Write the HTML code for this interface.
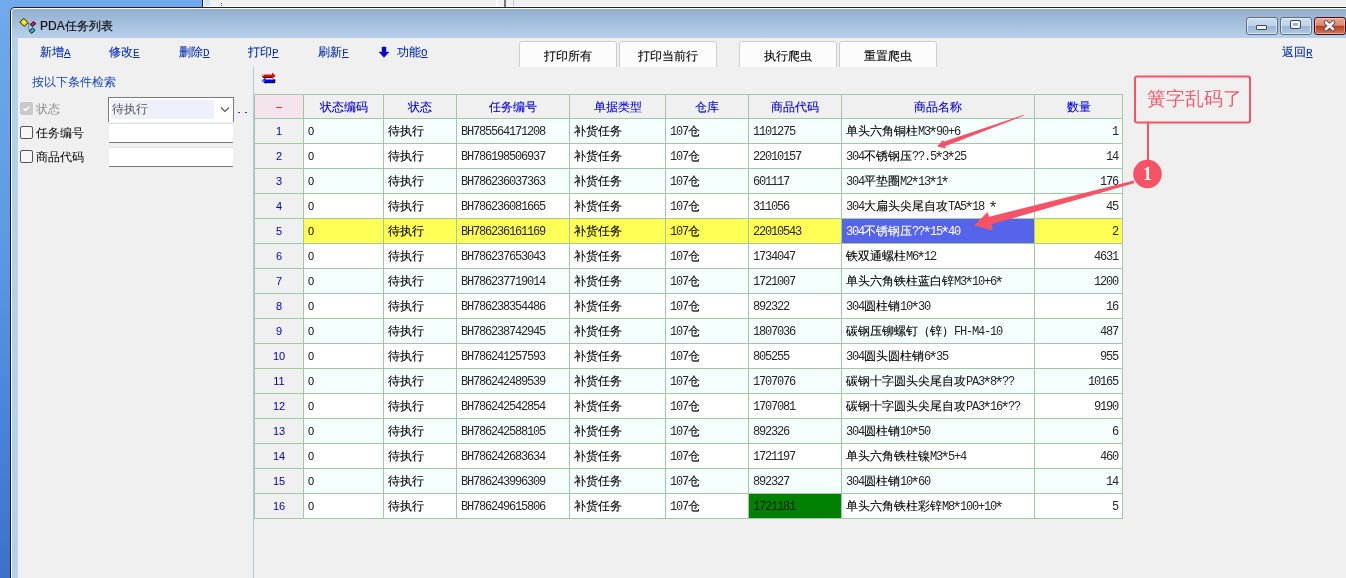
<!DOCTYPE html>
<html><head><meta charset="utf-8">
<style>
html,body{margin:0;padding:0}
body{width:1346px;height:578px;overflow:hidden;position:relative;font-family:"Liberation Sans",sans-serif;font-size:12px;
 background:linear-gradient(180deg,#70aaec 0%,#5e9ae4 40%,#4d88dc 66%,#3d70c6 100%)}
.abs{position:absolute}
.c{-webkit-text-stroke:0.1px currentColor;position:absolute;box-sizing:border-box;white-space:nowrap;overflow:hidden;line-height:24px;font-size:12px;color:#000;padding-left:4px}
.hdr{text-align:center;color:#0000e0;padding-left:0}
.hdr0{text-align:center;color:#ff0000;padding-left:0}
.rn{-webkit-text-stroke:0;text-align:center;color:#0000b0;padding-left:0;font-size:11px}
.t{font-size:11px;-webkit-text-stroke:0}
.q{text-align:right;padding-left:0;padding-right:4px}
.l{-webkit-text-stroke:0;font-family:"Liberation Mono",monospace;font-size:12px;letter-spacing:-1.2px}
.c .l{color:#262626}
.c.sel .l{color:#fff}
.ast{position:relative;top:3px;left:-1.8px;font-size:16px;letter-spacing:-3.6px;line-height:0}
.vl{position:absolute;width:1px;background:#a2c9a2}
.hl{position:absolute;height:1px;background:#a2c9a2}
.menu{-webkit-text-stroke:0.1px currentColor;position:absolute;top:45px;color:#002cb0;font-size:12px;line-height:14px;white-space:nowrap}
.menu u{-webkit-text-stroke:0;font-family:"Liberation Mono",monospace;font-size:11px}
.btn{-webkit-text-stroke:0.1px currentColor;position:absolute;top:41px;width:96px;height:30px;border:1px solid #cdcdcd;border-radius:3px;background:#fcfcfc;box-sizing:content-box;text-align:center;line-height:28px;font-size:12px;color:#000}
.cb{position:absolute;left:20px;width:11px;height:11px;border:1px solid #555;border-radius:2px;background:#f6f6f6}
.lab{position:absolute;left:36px;font-size:12px;line-height:14px;color:#000;white-space:nowrap}
.tb{position:absolute;left:109px;width:124px;background:#fff;border-top:1px solid #e3e3e3;border-bottom:1px solid #7a7a7a}
#root{position:absolute;left:0;top:0;width:1346px;height:578px;overflow:hidden;will-change:transform}
</style></head><body><div id="root">
<!-- back window strip -->
<div class="abs" style="left:202px;top:0;width:1144px;height:7px;background:#f0f0f0"></div>
<div class="abs" style="left:202px;top:0;width:1px;height:7px;background:#222"></div>
<div class="abs" style="left:203px;top:0;width:1px;height:7px;background:#fff"></div>
<div class="abs" style="left:204px;top:0;width:6px;height:6px;background:#d5e4f3"></div>
<div class="abs" style="left:203px;top:6px;width:1143px;height:1px;background:#fff"></div>
<div class="abs" style="left:221px;top:3px;width:1px;height:1px;background:#555"></div>
<div class="abs" style="left:221px;top:5px;width:1px;height:1px;background:#555"></div>
<div class="abs" style="left:496px;top:0;width:2px;height:6px;background:#fff"></div>
<div class="abs" style="left:504px;top:0;width:2px;height:7px;background:#777"></div>
<div class="abs" style="left:513px;top:0;width:1px;height:6px;background:#b0d0f4"></div>

<!-- main window frame -->
<div class="abs" style="left:10px;top:7px;width:1346px;height:600px;background:#222;border-top-left-radius:5px"></div>
<div class="abs" style="left:11px;top:8px;width:1346px;height:600px;background:#fff;border-top-left-radius:4px"></div>
<div class="abs" style="left:12px;top:9px;width:1346px;height:600px;background:linear-gradient(180deg,#93afd0 0px,#b8d0ea 29px,#b8d0ea 100%);border-top-left-radius:3px"></div>
<!-- client -->
<div class="abs" style="left:18px;top:38px;width:1328px;height:540px;background:#f0f0f0"></div>

<!-- title icon -->
<svg class="abs" style="left:18px;top:16px" width="22" height="20" viewBox="18 16 22 20">
 <path d="M27.5 23.5 H30.5 M28.5 23.5 V29.5 H30.5" stroke="#8a8a8a" stroke-width="1" fill="none"/>
 <path d="M20 22.2 L23.8 18.3 L28 22.6 L24.2 26.4 Z" fill="#f4ec00" stroke="#111" stroke-width="1"/>
 <path d="M30.3 24.6 L33.4 21.5 L35.8 23.7 L32.6 26.6 Z" fill="#d2108a" stroke="#111" stroke-width="1"/>
 <path d="M29.2 31 L32.6 28 L35 30.2 L31.8 33.4 Z" fill="#12c6d2" stroke="#111" stroke-width="1"/>
</svg>
<div class="abs" style="left:40px;top:19px;font-size:12px;line-height:14px;color:#101010;-webkit-text-stroke:0.2px #101010">PDA任务列表</div>

<!-- caption buttons -->
<div class="abs" style="left:1246px;top:17px;width:30px;height:16px;border:1px solid #5b6d85;border-radius:3px;box-shadow:inset 0 0 0 1px rgba(255,255,255,0.55);background:linear-gradient(180deg,#cadcf0 0,#bed3ea 50%,#99b5d4 51%,#b0c9e5 100%)"></div>
<div class="abs" style="left:1256px;top:25px;width:9px;height:3px;border:1px solid #39475a;background:#f2f2f2;border-radius:1px"></div>
<div class="abs" style="left:1280px;top:17px;width:30px;height:16px;border:1px solid #5b6d85;border-radius:3px;box-shadow:inset 0 0 0 1px rgba(255,255,255,0.55);background:linear-gradient(180deg,#cadcf0 0,#bed3ea 50%,#99b5d4 51%,#b0c9e5 100%)"></div>
<div class="abs" style="left:1291px;top:21px;width:5px;height:3px;border:2px solid #f2f2f2;outline:1px solid #39475a;background:#9ab6d6;border-radius:1px"></div>
<div class="abs" style="left:1314px;top:17px;width:30px;height:16px;border:1px solid #4a0e12;border-radius:3px;box-shadow:inset 0 0 0 1px rgba(255,220,210,0.5);background:linear-gradient(180deg,#eaa692 0,#db8a74 45%,#bc3e20 52%,#d2765c 100%)"></div>
<svg class="abs" style="left:1322px;top:20px" width="16" height="12" viewBox="0 0 16 12">
 <path d="M4 2.5 L11 9 M11 2.5 L4 9" stroke="#3a3f48" stroke-width="4.4" stroke-linecap="round"/>
 <path d="M4 2.5 L11 9 M11 2.5 L4 9" stroke="#f6f6f6" stroke-width="2.8" stroke-linecap="round"/>
</svg>
<!-- menu -->
<div class="menu" style="left:40px">新增<u>A</u></div>
<div class="menu" style="left:109px">修改<u>E</u></div>
<div class="menu" style="left:179px">删除<u>D</u></div>
<div class="menu" style="left:248px">打印<u>P</u></div>
<div class="menu" style="left:318px">刷新<u>F</u></div>
<svg class="abs" style="left:378px;top:46px" width="12" height="13" viewBox="0 0 12 13">
 <path d="M4 1 H8 V6 H11 L6 11.5 L1 6 H4 Z" fill="#0000f0" stroke="#333" stroke-width="0.5"/>
</svg>
<div class="menu" style="left:397px">功能<u>O</u></div>
<div class="menu" style="left:1282px">返回<u>R</u></div>

<!-- buttons -->
<div class="btn" style="left:519px">打印所有</div>
<div class="btn" style="left:619px">打印当前行</div>
<div class="btn" style="left:739px">执行爬虫</div>
<div class="btn" style="left:839px">重置爬虫</div>
<div class="abs" style="left:500px;top:67px;width:460px;height:8px;background:#f0f0f0"></div>

<!-- left panel -->
<div class="abs" style="left:32px;top:75px;font-size:12px;line-height:14px;color:#1846b8;white-space:nowrap">按以下条件检索</div>
<div class="cb" style="top:102px;background:#c9c9c9;border-color:#c9c9c9"></div>
<svg class="abs" style="left:20px;top:102px" width="13" height="13"><path d="M3.5 6.5 L5.5 8.5 L9.5 4.5" stroke="#fff" stroke-width="1.3" fill="none"/></svg>
<div class="lab" style="top:102px;color:#8c8c8c">状态</div>
<div class="cb" style="top:126px"></div>
<div class="lab" style="top:126px">任务编号</div>
<div class="cb" style="top:150px"></div>
<div class="lab" style="top:150px">商品代码</div>

<div class="abs" style="left:108px;top:97px;width:124px;height:24px;background:#fff;border:1px solid #7a7a7a;border-bottom:none"></div>
<div class="abs" style="left:111px;top:100px;width:103px;height:19px;background:#eef0fc"></div>
<div class="abs" style="left:112px;top:102px;font-size:12px;line-height:14px;color:#555">待执行</div>
<svg class="abs" style="left:220px;top:106px" width="11" height="8"><path d="M1 1.5 L5 5.5 L9 1.5" stroke="#555" stroke-width="1.1" fill="none"/></svg>
<div class="abs" style="left:238px;top:112px;width:2px;height:1px;background:#1c3ee0"></div>
<div class="abs" style="left:245px;top:112px;width:2px;height:1px;background:#1c3ee0"></div>
<div class="tb" style="top:123px;height:18px"></div>
<div class="tb" style="top:147px;height:18px"></div>

<!-- splitter -->
<div class="abs" style="left:253px;top:67px;width:1px;height:511px;background:#a9cbf2"></div>
<div class="abs" style="left:17px;top:38px;width:1px;height:540px;background:#b9d1ea"></div>

<!-- grid toolbar icon -->
<svg class="abs" style="left:0;top:0" width="300" height="100" viewBox="0 0 300 100">
 <rect x="263" y="77" width="9" height="1" fill="#111"/>
 <rect x="262" y="74.6" width="11" height="2.4" fill="#f00000"/>
 <path d="M272 72.5 L275.5 75.8 L272 79 Z" fill="#f00000"/>
 <rect x="262.5" y="74.5" width="1.5" height="1.5" fill="#ffe000"/>
 <rect x="265" y="82" width="10" height="1.2" fill="#111"/>
 <rect x="264" y="79.5" width="11" height="2.5" fill="#0000f0"/>
 <path d="M265.5 77.5 L261.8 80.8 L265.5 84 Z" fill="#0000f0"/>
 <rect x="263" y="80" width="1.5" height="1.5" fill="#20d0ff"/>
 <rect x="273.5" y="79.5" width="1.8" height="3" fill="#000060"/>
</svg>
<div class="c hdr0" style="left:255px;top:95px;width:48px;height:23px;background:#f5e4ee">－</div>
<div class="c hdr" style="left:304px;top:95px;width:79px;height:23px;background:#f0f0f0">状态编码</div>
<div class="c hdr" style="left:384px;top:95px;width:72px;height:23px;background:#f0f0f0">状态</div>
<div class="c hdr" style="left:457px;top:95px;width:112px;height:23px;background:#f0f0f0">任务编号</div>
<div class="c hdr" style="left:570px;top:95px;width:95px;height:23px;background:#f0f0f0">单据类型</div>
<div class="c hdr" style="left:666px;top:95px;width:82px;height:23px;background:#f0f0f0">仓库</div>
<div class="c hdr" style="left:749px;top:95px;width:92px;height:23px;background:#f0f0f0">商品代码</div>
<div class="c hdr" style="left:842px;top:95px;width:192px;height:23px;background:#f0f0f0">商品名称</div>
<div class="c hdr" style="left:1035px;top:95px;width:87px;height:23px;background:#f0f0f0">数量</div>
<div class="c rn" style="left:255px;top:119px;width:48px;height:24px;background:#f0f0f0;">1</div>
<div class="c d t" style="left:304px;top:119px;width:79px;height:24px;background:#f5ffff;">0</div>
<div class="c d" style="left:384px;top:119px;width:72px;height:24px;background:#f5ffff;">待执行</div>
<div class="c d" style="left:457px;top:119px;width:112px;height:24px;background:#f5ffff;"><span class="l">BH785564171208</span></div>
<div class="c d" style="left:570px;top:119px;width:95px;height:24px;background:#f5ffff;">补货任务</div>
<div class="c d" style="left:666px;top:119px;width:82px;height:24px;background:#f5ffff;"><span class="l">107</span>仓</div>
<div class="c d" style="left:749px;top:119px;width:92px;height:24px;background:#f5ffff;"><span class="l">1101275</span></div>
<div class="c d" style="left:842px;top:119px;width:192px;height:24px;background:#f5ffff;">单头六角铜柱<span class="l">M3<span class="ast">*</span>90+6</span></div>
<div class="c d q" style="left:1035px;top:119px;width:87px;height:24px;background:#f5ffff;"><span class="l">1</span></div>
<div class="c rn" style="left:255px;top:144px;width:48px;height:24px;background:#f0f0f0;">2</div>
<div class="c d t" style="left:304px;top:144px;width:79px;height:24px;background:#ffffff;">0</div>
<div class="c d" style="left:384px;top:144px;width:72px;height:24px;background:#ffffff;">待执行</div>
<div class="c d" style="left:457px;top:144px;width:112px;height:24px;background:#ffffff;"><span class="l">BH786198506937</span></div>
<div class="c d" style="left:570px;top:144px;width:95px;height:24px;background:#ffffff;">补货任务</div>
<div class="c d" style="left:666px;top:144px;width:82px;height:24px;background:#ffffff;"><span class="l">107</span>仓</div>
<div class="c d" style="left:749px;top:144px;width:92px;height:24px;background:#ffffff;"><span class="l">22010157</span></div>
<div class="c d" style="left:842px;top:144px;width:192px;height:24px;background:#ffffff;"><span class="l">304</span>不锈钢压<span class="l">??.5<span class="ast">*</span>3<span class="ast">*</span>25</span></div>
<div class="c d q" style="left:1035px;top:144px;width:87px;height:24px;background:#ffffff;"><span class="l">14</span></div>
<div class="c rn" style="left:255px;top:169px;width:48px;height:24px;background:#f0f0f0;">3</div>
<div class="c d t" style="left:304px;top:169px;width:79px;height:24px;background:#f5ffff;">0</div>
<div class="c d" style="left:384px;top:169px;width:72px;height:24px;background:#f5ffff;">待执行</div>
<div class="c d" style="left:457px;top:169px;width:112px;height:24px;background:#f5ffff;"><span class="l">BH786236037363</span></div>
<div class="c d" style="left:570px;top:169px;width:95px;height:24px;background:#f5ffff;">补货任务</div>
<div class="c d" style="left:666px;top:169px;width:82px;height:24px;background:#f5ffff;"><span class="l">107</span>仓</div>
<div class="c d" style="left:749px;top:169px;width:92px;height:24px;background:#f5ffff;"><span class="l">601117</span></div>
<div class="c d" style="left:842px;top:169px;width:192px;height:24px;background:#f5ffff;"><span class="l">304</span>平垫圈<span class="l">M2<span class="ast">*</span>13<span class="ast">*</span>1<span class="ast">*</span></span></div>
<div class="c d q" style="left:1035px;top:169px;width:87px;height:24px;background:#f5ffff;"><span class="l">176</span></div>
<div class="c rn" style="left:255px;top:194px;width:48px;height:24px;background:#f0f0f0;">4</div>
<div class="c d t" style="left:304px;top:194px;width:79px;height:24px;background:#ffffff;">0</div>
<div class="c d" style="left:384px;top:194px;width:72px;height:24px;background:#ffffff;">待执行</div>
<div class="c d" style="left:457px;top:194px;width:112px;height:24px;background:#ffffff;"><span class="l">BH786236081665</span></div>
<div class="c d" style="left:570px;top:194px;width:95px;height:24px;background:#ffffff;">补货任务</div>
<div class="c d" style="left:666px;top:194px;width:82px;height:24px;background:#ffffff;"><span class="l">107</span>仓</div>
<div class="c d" style="left:749px;top:194px;width:92px;height:24px;background:#ffffff;"><span class="l">311056</span></div>
<div class="c d" style="left:842px;top:194px;width:192px;height:24px;background:#ffffff;"><span class="l">304</span>大扁头尖尾自攻<span class="l">TA5<span class="ast">*</span>18&nbsp;<span class="ast">*</span></span></div>
<div class="c d q" style="left:1035px;top:194px;width:87px;height:24px;background:#ffffff;"><span class="l">45</span></div>
<div class="c rn" style="left:255px;top:219px;width:48px;height:24px;background:#f0f0f0;">5</div>
<div class="c d t" style="left:304px;top:219px;width:79px;height:24px;background:#ffff55;">0</div>
<div class="c d" style="left:384px;top:219px;width:72px;height:24px;background:#ffff55;">待执行</div>
<div class="c d" style="left:457px;top:219px;width:112px;height:24px;background:#ffff55;"><span class="l">BH786236161169</span></div>
<div class="c d" style="left:570px;top:219px;width:95px;height:24px;background:#ffff55;">补货任务</div>
<div class="c d" style="left:666px;top:219px;width:82px;height:24px;background:#ffff55;"><span class="l">107</span>仓</div>
<div class="c d" style="left:749px;top:219px;width:92px;height:24px;background:#ffff55;"><span class="l">22010543</span></div>
<div class="c d sel" style="left:842px;top:219px;width:192px;height:24px;background:#5664ec;color:#fff;"><span class="l">304</span>不锈钢压<span class="l">??<span class="ast">*</span>15<span class="ast">*</span>40</span></div>
<div class="c d q" style="left:1035px;top:219px;width:87px;height:24px;background:#ffff55;"><span class="l">2</span></div>
<div class="c rn" style="left:255px;top:244px;width:48px;height:24px;background:#f0f0f0;">6</div>
<div class="c d t" style="left:304px;top:244px;width:79px;height:24px;background:#ffffff;">0</div>
<div class="c d" style="left:384px;top:244px;width:72px;height:24px;background:#ffffff;">待执行</div>
<div class="c d" style="left:457px;top:244px;width:112px;height:24px;background:#ffffff;"><span class="l">BH786237653043</span></div>
<div class="c d" style="left:570px;top:244px;width:95px;height:24px;background:#ffffff;">补货任务</div>
<div class="c d" style="left:666px;top:244px;width:82px;height:24px;background:#ffffff;"><span class="l">107</span>仓</div>
<div class="c d" style="left:749px;top:244px;width:92px;height:24px;background:#ffffff;"><span class="l">1734047</span></div>
<div class="c d" style="left:842px;top:244px;width:192px;height:24px;background:#ffffff;">铁双通螺柱<span class="l">M6<span class="ast">*</span>12</span></div>
<div class="c d q" style="left:1035px;top:244px;width:87px;height:24px;background:#ffffff;"><span class="l">4631</span></div>
<div class="c rn" style="left:255px;top:269px;width:48px;height:24px;background:#f0f0f0;">7</div>
<div class="c d t" style="left:304px;top:269px;width:79px;height:24px;background:#f5ffff;">0</div>
<div class="c d" style="left:384px;top:269px;width:72px;height:24px;background:#f5ffff;">待执行</div>
<div class="c d" style="left:457px;top:269px;width:112px;height:24px;background:#f5ffff;"><span class="l">BH786237719014</span></div>
<div class="c d" style="left:570px;top:269px;width:95px;height:24px;background:#f5ffff;">补货任务</div>
<div class="c d" style="left:666px;top:269px;width:82px;height:24px;background:#f5ffff;"><span class="l">107</span>仓</div>
<div class="c d" style="left:749px;top:269px;width:92px;height:24px;background:#f5ffff;"><span class="l">1721007</span></div>
<div class="c d" style="left:842px;top:269px;width:192px;height:24px;background:#f5ffff;">单头六角铁柱蓝白锌<span class="l">M3<span class="ast">*</span>10+6<span class="ast">*</span></span></div>
<div class="c d q" style="left:1035px;top:269px;width:87px;height:24px;background:#f5ffff;"><span class="l">1200</span></div>
<div class="c rn" style="left:255px;top:294px;width:48px;height:24px;background:#f0f0f0;">8</div>
<div class="c d t" style="left:304px;top:294px;width:79px;height:24px;background:#ffffff;">0</div>
<div class="c d" style="left:384px;top:294px;width:72px;height:24px;background:#ffffff;">待执行</div>
<div class="c d" style="left:457px;top:294px;width:112px;height:24px;background:#ffffff;"><span class="l">BH786238354486</span></div>
<div class="c d" style="left:570px;top:294px;width:95px;height:24px;background:#ffffff;">补货任务</div>
<div class="c d" style="left:666px;top:294px;width:82px;height:24px;background:#ffffff;"><span class="l">107</span>仓</div>
<div class="c d" style="left:749px;top:294px;width:92px;height:24px;background:#ffffff;"><span class="l">892322</span></div>
<div class="c d" style="left:842px;top:294px;width:192px;height:24px;background:#ffffff;"><span class="l">304</span>圆柱销<span class="l">10<span class="ast">*</span>30</span></div>
<div class="c d q" style="left:1035px;top:294px;width:87px;height:24px;background:#ffffff;"><span class="l">16</span></div>
<div class="c rn" style="left:255px;top:319px;width:48px;height:24px;background:#f0f0f0;">9</div>
<div class="c d t" style="left:304px;top:319px;width:79px;height:24px;background:#f5ffff;">0</div>
<div class="c d" style="left:384px;top:319px;width:72px;height:24px;background:#f5ffff;">待执行</div>
<div class="c d" style="left:457px;top:319px;width:112px;height:24px;background:#f5ffff;"><span class="l">BH786238742945</span></div>
<div class="c d" style="left:570px;top:319px;width:95px;height:24px;background:#f5ffff;">补货任务</div>
<div class="c d" style="left:666px;top:319px;width:82px;height:24px;background:#f5ffff;"><span class="l">107</span>仓</div>
<div class="c d" style="left:749px;top:319px;width:92px;height:24px;background:#f5ffff;"><span class="l">1807036</span></div>
<div class="c d" style="left:842px;top:319px;width:192px;height:24px;background:#f5ffff;">碳钢压铆螺钉（锌）<span class="l">FH-M4-10</span></div>
<div class="c d q" style="left:1035px;top:319px;width:87px;height:24px;background:#f5ffff;"><span class="l">487</span></div>
<div class="c rn" style="left:255px;top:344px;width:48px;height:24px;background:#f0f0f0;">10</div>
<div class="c d t" style="left:304px;top:344px;width:79px;height:24px;background:#ffffff;">0</div>
<div class="c d" style="left:384px;top:344px;width:72px;height:24px;background:#ffffff;">待执行</div>
<div class="c d" style="left:457px;top:344px;width:112px;height:24px;background:#ffffff;"><span class="l">BH786241257593</span></div>
<div class="c d" style="left:570px;top:344px;width:95px;height:24px;background:#ffffff;">补货任务</div>
<div class="c d" style="left:666px;top:344px;width:82px;height:24px;background:#ffffff;"><span class="l">107</span>仓</div>
<div class="c d" style="left:749px;top:344px;width:92px;height:24px;background:#ffffff;"><span class="l">805255</span></div>
<div class="c d" style="left:842px;top:344px;width:192px;height:24px;background:#ffffff;"><span class="l">304</span>圆头圆柱销<span class="l">6<span class="ast">*</span>35</span></div>
<div class="c d q" style="left:1035px;top:344px;width:87px;height:24px;background:#ffffff;"><span class="l">955</span></div>
<div class="c rn" style="left:255px;top:369px;width:48px;height:24px;background:#f0f0f0;">11</div>
<div class="c d t" style="left:304px;top:369px;width:79px;height:24px;background:#f5ffff;">0</div>
<div class="c d" style="left:384px;top:369px;width:72px;height:24px;background:#f5ffff;">待执行</div>
<div class="c d" style="left:457px;top:369px;width:112px;height:24px;background:#f5ffff;"><span class="l">BH786242489539</span></div>
<div class="c d" style="left:570px;top:369px;width:95px;height:24px;background:#f5ffff;">补货任务</div>
<div class="c d" style="left:666px;top:369px;width:82px;height:24px;background:#f5ffff;"><span class="l">107</span>仓</div>
<div class="c d" style="left:749px;top:369px;width:92px;height:24px;background:#f5ffff;"><span class="l">1707076</span></div>
<div class="c d" style="left:842px;top:369px;width:192px;height:24px;background:#f5ffff;">碳钢十字圆头尖尾自攻<span class="l">PA3<span class="ast">*</span>8<span class="ast">*</span>??</span></div>
<div class="c d q" style="left:1035px;top:369px;width:87px;height:24px;background:#f5ffff;"><span class="l">10165</span></div>
<div class="c rn" style="left:255px;top:394px;width:48px;height:24px;background:#f0f0f0;">12</div>
<div class="c d t" style="left:304px;top:394px;width:79px;height:24px;background:#ffffff;">0</div>
<div class="c d" style="left:384px;top:394px;width:72px;height:24px;background:#ffffff;">待执行</div>
<div class="c d" style="left:457px;top:394px;width:112px;height:24px;background:#ffffff;"><span class="l">BH786242542854</span></div>
<div class="c d" style="left:570px;top:394px;width:95px;height:24px;background:#ffffff;">补货任务</div>
<div class="c d" style="left:666px;top:394px;width:82px;height:24px;background:#ffffff;"><span class="l">107</span>仓</div>
<div class="c d" style="left:749px;top:394px;width:92px;height:24px;background:#ffffff;"><span class="l">1707081</span></div>
<div class="c d" style="left:842px;top:394px;width:192px;height:24px;background:#ffffff;">碳钢十字圆头尖尾自攻<span class="l">PA3<span class="ast">*</span>16<span class="ast">*</span>??</span></div>
<div class="c d q" style="left:1035px;top:394px;width:87px;height:24px;background:#ffffff;"><span class="l">9190</span></div>
<div class="c rn" style="left:255px;top:419px;width:48px;height:24px;background:#f0f0f0;">13</div>
<div class="c d t" style="left:304px;top:419px;width:79px;height:24px;background:#f5ffff;">0</div>
<div class="c d" style="left:384px;top:419px;width:72px;height:24px;background:#f5ffff;">待执行</div>
<div class="c d" style="left:457px;top:419px;width:112px;height:24px;background:#f5ffff;"><span class="l">BH786242588105</span></div>
<div class="c d" style="left:570px;top:419px;width:95px;height:24px;background:#f5ffff;">补货任务</div>
<div class="c d" style="left:666px;top:419px;width:82px;height:24px;background:#f5ffff;"><span class="l">107</span>仓</div>
<div class="c d" style="left:749px;top:419px;width:92px;height:24px;background:#f5ffff;"><span class="l">892326</span></div>
<div class="c d" style="left:842px;top:419px;width:192px;height:24px;background:#f5ffff;"><span class="l">304</span>圆柱销<span class="l">10<span class="ast">*</span>50</span></div>
<div class="c d q" style="left:1035px;top:419px;width:87px;height:24px;background:#f5ffff;"><span class="l">6</span></div>
<div class="c rn" style="left:255px;top:444px;width:48px;height:24px;background:#f0f0f0;">14</div>
<div class="c d t" style="left:304px;top:444px;width:79px;height:24px;background:#ffffff;">0</div>
<div class="c d" style="left:384px;top:444px;width:72px;height:24px;background:#ffffff;">待执行</div>
<div class="c d" style="left:457px;top:444px;width:112px;height:24px;background:#ffffff;"><span class="l">BH786242683634</span></div>
<div class="c d" style="left:570px;top:444px;width:95px;height:24px;background:#ffffff;">补货任务</div>
<div class="c d" style="left:666px;top:444px;width:82px;height:24px;background:#ffffff;"><span class="l">107</span>仓</div>
<div class="c d" style="left:749px;top:444px;width:92px;height:24px;background:#ffffff;"><span class="l">1721197</span></div>
<div class="c d" style="left:842px;top:444px;width:192px;height:24px;background:#ffffff;">单头六角铁柱镍<span class="l">M3<span class="ast">*</span>5+4</span></div>
<div class="c d q" style="left:1035px;top:444px;width:87px;height:24px;background:#ffffff;"><span class="l">460</span></div>
<div class="c rn" style="left:255px;top:469px;width:48px;height:24px;background:#f0f0f0;">15</div>
<div class="c d t" style="left:304px;top:469px;width:79px;height:24px;background:#f5ffff;">0</div>
<div class="c d" style="left:384px;top:469px;width:72px;height:24px;background:#f5ffff;">待执行</div>
<div class="c d" style="left:457px;top:469px;width:112px;height:24px;background:#f5ffff;"><span class="l">BH786243996309</span></div>
<div class="c d" style="left:570px;top:469px;width:95px;height:24px;background:#f5ffff;">补货任务</div>
<div class="c d" style="left:666px;top:469px;width:82px;height:24px;background:#f5ffff;"><span class="l">107</span>仓</div>
<div class="c d" style="left:749px;top:469px;width:92px;height:24px;background:#f5ffff;"><span class="l">892327</span></div>
<div class="c d" style="left:842px;top:469px;width:192px;height:24px;background:#f5ffff;"><span class="l">304</span>圆柱销<span class="l">10<span class="ast">*</span>60</span></div>
<div class="c d q" style="left:1035px;top:469px;width:87px;height:24px;background:#f5ffff;"><span class="l">14</span></div>
<div class="c rn" style="left:255px;top:494px;width:48px;height:24px;background:#f0f0f0;">16</div>
<div class="c d t" style="left:304px;top:494px;width:79px;height:24px;background:#ffffff;">0</div>
<div class="c d" style="left:384px;top:494px;width:72px;height:24px;background:#ffffff;">待执行</div>
<div class="c d" style="left:457px;top:494px;width:112px;height:24px;background:#ffffff;"><span class="l">BH786249615806</span></div>
<div class="c d" style="left:570px;top:494px;width:95px;height:24px;background:#ffffff;">补货任务</div>
<div class="c d" style="left:666px;top:494px;width:82px;height:24px;background:#ffffff;"><span class="l">107</span>仓</div>
<div class="c d" style="left:749px;top:494px;width:92px;height:24px;background:#008000;color:#1a1a1a;"><span class="l">1721181</span></div>
<div class="c d" style="left:842px;top:494px;width:192px;height:24px;background:#ffffff;">单头六角铁柱彩锌<span class="l">M8<span class="ast">*</span>100+10<span class="ast">*</span></span></div>
<div class="c d q" style="left:1035px;top:494px;width:87px;height:24px;background:#ffffff;"><span class="l">5</span></div>
<div class="vl" style="left:254px;top:94px;height:425px"></div>
<div class="vl" style="left:303px;top:94px;height:425px"></div>
<div class="vl" style="left:383px;top:94px;height:425px"></div>
<div class="vl" style="left:456px;top:94px;height:425px"></div>
<div class="vl" style="left:569px;top:94px;height:425px"></div>
<div class="vl" style="left:665px;top:94px;height:425px"></div>
<div class="vl" style="left:748px;top:94px;height:425px"></div>
<div class="vl" style="left:841px;top:94px;height:425px"></div>
<div class="vl" style="left:1034px;top:94px;height:425px"></div>
<div class="vl" style="left:1122px;top:94px;height:425px"></div>
<div class="hl" style="left:254px;top:94px;width:869px"></div>
<div class="hl" style="left:254px;top:118px;width:869px"></div>
<div class="hl" style="left:254px;top:143px;width:869px"></div>
<div class="hl" style="left:254px;top:168px;width:869px"></div>
<div class="hl" style="left:254px;top:193px;width:869px"></div>
<div class="hl" style="left:254px;top:218px;width:869px"></div>
<div class="hl" style="left:254px;top:243px;width:869px"></div>
<div class="hl" style="left:254px;top:268px;width:869px"></div>
<div class="hl" style="left:254px;top:293px;width:869px"></div>
<div class="hl" style="left:254px;top:318px;width:869px"></div>
<div class="hl" style="left:254px;top:343px;width:869px"></div>
<div class="hl" style="left:254px;top:368px;width:869px"></div>
<div class="hl" style="left:254px;top:393px;width:869px"></div>
<div class="hl" style="left:254px;top:418px;width:869px"></div>
<div class="hl" style="left:254px;top:443px;width:869px"></div>
<div class="hl" style="left:254px;top:468px;width:869px"></div>
<div class="hl" style="left:254px;top:493px;width:869px"></div>
<div class="hl" style="left:254px;top:518px;width:869px"></div>

<!-- annotation -->
<svg class="abs" style="left:0;top:0" width="1346" height="578" viewBox="0 0 1346 578">
 <rect x="1135" y="76.5" width="115" height="46" rx="2" fill="none" stroke="#f65366" stroke-width="2"/>
 <line x1="1148" y1="123" x2="1148" y2="162" stroke="#f65366" stroke-width="2"/>
 <circle cx="1147.5" cy="174" r="14.3" fill="#f65366"/>
 <path d="M1134 180.5 L989.2 216.8 L987.5 212 L974.3 225.4 L992.7 230.6 L991.6 224.3 L1134 183.3 Z" fill="#f65366"/>
 <path d="M1024 114.8 L944.1 141.6 L942.7 140.2 L937.1 146.5 L946 148.6 L945.1 146.3 L1024 115.6 Z" fill="#f65366"/>
</svg>
<div class="abs" style="left:1147px;top:89px;font-size:18.5px;line-height:20px;color:#f65a6a;white-space:nowrap">簧字乱码了</div>
<div class="abs" style="left:1137px;top:164px;width:21px;text-align:center;font-family:'Liberation Serif',serif;font-size:18px;line-height:20px;color:#fff;font-weight:bold">1</div>
</div></body></html>
